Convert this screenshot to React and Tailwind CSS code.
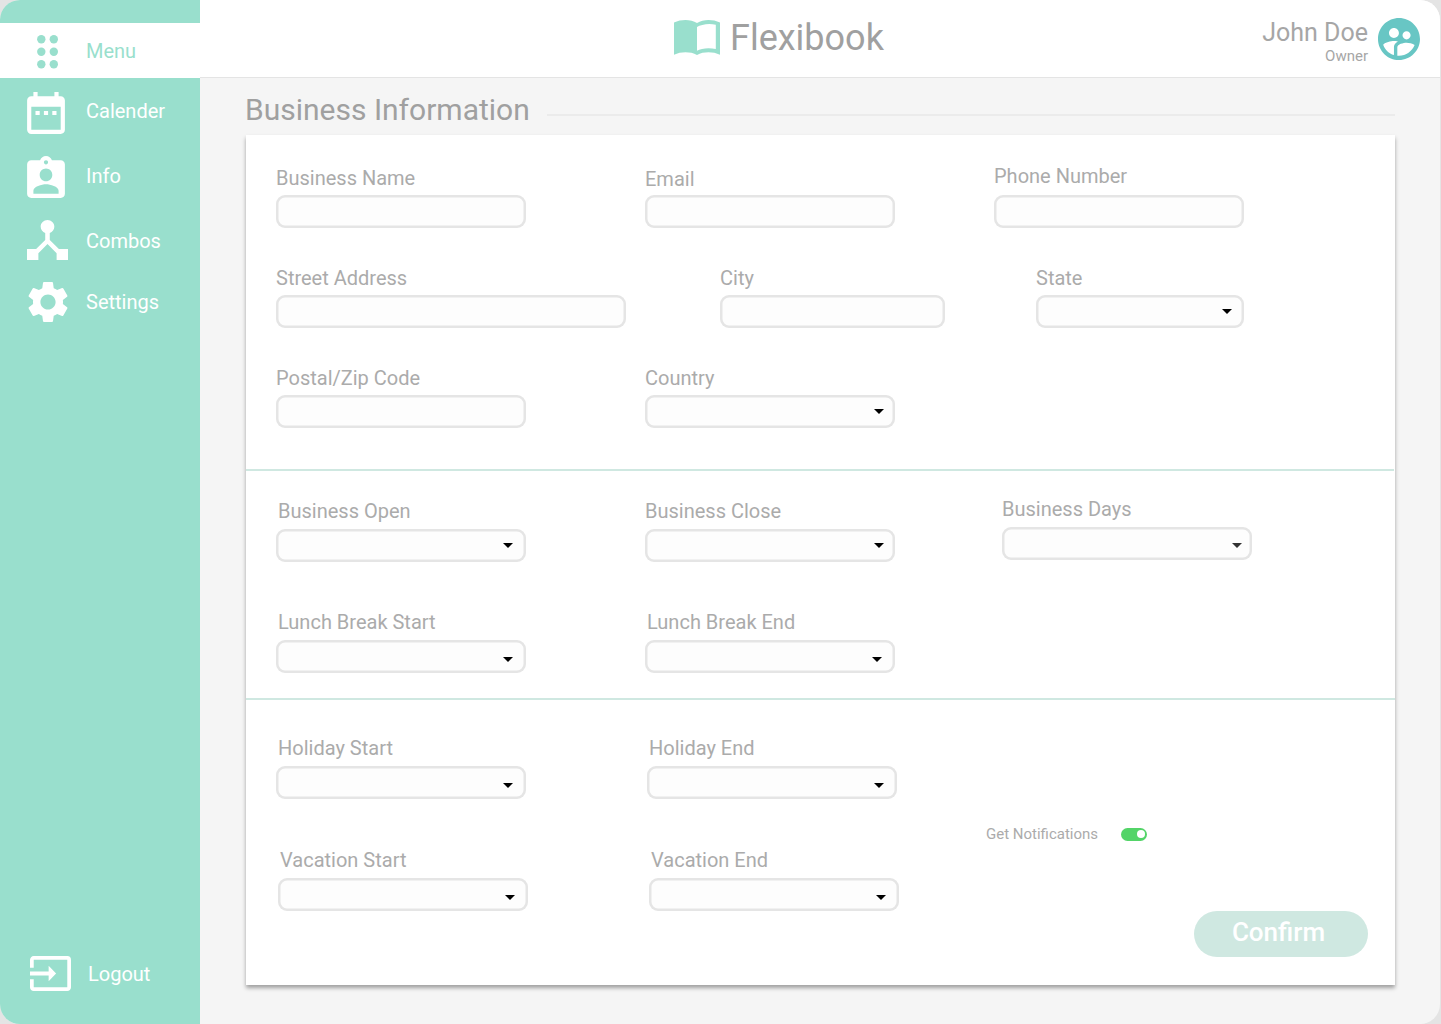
import React from "react";
import {
  MdAssignmentInd,
  MdDateRange,
  MdDeviceHub,
  MdInput,
  MdSupervisedUserCircle,
} from "react-icons/md";

function DotsIcon({ className }) {
  return (
    <svg className={className} viewBox="0 0 21 34" fill="currentColor">
      {[4.3, 16.8].map((x) =>
        [4.3, 16.8, 29.3].map((y) => <circle key={`${x}-${y}`} cx={x} cy={y} r="4.2" />)
      )}
    </svg>
  );
}

function GearIcon({ className }) {
  return (
    <svg className={className} viewBox="2 2 20 20" fill="currentColor">
      <path d="M19.43 12.98c.04-.32.07-.64.07-.98s-.03-.66-.07-.98l2.11-1.65c.19-.15.24-.42.12-.64l-2-3.46c-.12-.22-.39-.3-.61-.22l-2.49 1c-.52-.4-1.08-.73-1.69-.98l-.38-2.65C14.46 2.18 14.25 2 14 2h-4c-.25 0-.46.18-.49.42l-.38 2.65c-.61.25-1.17.59-1.69.98l-2.49-1c-.23-.09-.49 0-.61.22l-2 3.46c-.13.22-.07.49.12.64l2.11 1.65c-.04.32-.07.65-.07.98s.03.66.07.98l-2.11 1.65c-.19.15-.24.42-.12.64l2 3.46c.12.22.39.3.61.22l2.49-1c.52.4 1.08.73 1.69.98l.38 2.65c.03.24.24.42.49.42h4c.25 0 .46-.18.49-.42l.38-2.65c.61-.25 1.17-.59 1.69-.98l2.49 1c.23.09.49 0 .61-.22l2-3.46c.12-.22.07-.49-.12-.64l-2.11-1.65zM12 15.8c-2.1 0-3.8-1.7-3.8-3.8s1.7-3.8 3.8-3.8 3.8 1.7 3.8 3.8-1.7 3.8-3.8 3.8z" />
    </svg>
  );
}

function BookIcon({ className }) {
  return (
    <svg className={className} viewBox="0 0 46 35" fill="currentColor">
      <path
        fillRule="evenodd"
        d="M0 2.6C3.6.8 7.6 0 11.5 0 15.600 0 19.800.8 23 3.100 26.200.8 30.400 0 34.500 0 38.400 0 42.400.8 46 2.600V34.700C42.400 33 38.500 32.200 34.500 32.200 30.400 32.200 26.400 32.900 23 35 19.600 32.900 15.600 32.200 11.500 32.200 7.500 32.200 3.600 33 0 34.700ZM23 7V30.800C27 28.500 34.500 27.200 41.800 29.100V4.700C34.500 2.900 27 4.500 23 7Z"
      />
    </svg>
  );
}

function Caret({ className }) {
  return (
    <svg className={`h-[5px] w-[10px] ${className}`} viewBox="0 0 10 5" fill="currentColor">
      <path d="M0 0H10L5 5Z" />
    </svg>
  );
}

function Field({ label, className = "", labelClass = "mb-[5px]", width = "w-[250px]", caret }) {
  return (
    <div className={`flex flex-none flex-col ${width} ${className}`}>
      <label className={`whitespace-nowrap text-[20px] leading-6 text-[#ababab] ${labelClass}`}>
        {label}
      </label>
      <div className="flex h-[33px] items-center justify-end rounded-[9px] bg-[#fdfdfd] shadow-[inset_0_0_0_2.5px_#e5e5e5]">
        {caret && <Caret className={caret} />}
      </div>
    </div>
  );
}

function NavItem({ icon, label, className }) {
  return (
    <a className={`flex flex-none items-center text-[20px] leading-6 ${className}`}>
      {icon}
      <span>{label}</span>
    </a>
  );
}

function Sidebar() {
  return (
    <nav className="flex w-[200px] flex-none flex-col bg-[#99dfcd] text-white">
      <NavItem
        className="mt-[23px] h-[55px] bg-white pl-[37px] text-[#99dfcd]"
        icon={<DotsIcon className="mt-[2px] mr-7 h-[34px] w-[21px]" />}
        label="Menu"
      />
      <NavItem
        className="h-[65px] pl-[27px]"
        icon={<MdDateRange viewBox="3 2 18 20" className="mt-1 mr-[21px] h-[42px] w-[38px]" />}
        label="Calender"
      />
      <NavItem
        className="h-[65px] pl-[27px]"
        icon={<MdAssignmentInd viewBox="3 1 18 20" className="mt-[3px] mr-[21px] h-[42px] w-[38px]" />}
        label="Info"
      />
      <NavItem
        className="h-[65px] pl-[27px]"
        icon={<MdDeviceHub viewBox="3 3 18 18" preserveAspectRatio="none" className="mb-px mr-[18px] h-10 w-[41px]" />}
        label="Combos"
      />
      <NavItem
        className="h-[58px] pl-[27.500px]"
        icon={<GearIcon className="mr-[18.500px] h-10 w-10" />}
        label="Settings"
      />
      <NavItem
        className="mt-auto mb-[32px] h-9 pl-[30px]"
        icon={<MdInput viewBox="1 3 22 18" preserveAspectRatio="none" className="mb-[2px] mr-[17px] h-[35px] w-[41px]" />}
        label="Logout"
      />
    </nav>
  );
}

function Header() {
  return (
    <header className="flex h-[78px] flex-none items-start border-b border-[#e4e4e4] bg-white pr-5 pl-[474px]">
      <div className="flex items-start text-[#99dfcd]">
        <BookIcon className="mt-5 h-[35px] w-[46px]" />
        <span className="mt-[16px] ml-[10px] text-[36px] leading-[44px] text-[#a0a0a0]">Flexibook</span>
      </div>
      <div className="mt-[17px] ml-auto flex flex-col items-end text-[#a6a6a6]">
        <span className="text-[25px] leading-[31px]">John Doe</span>
        <span className="text-[15px] leading-[17px]">Owner</span>
      </div>
      <MdSupervisedUserCircle viewBox="2 2 20 20" className="mt-[18px] ml-[10px] h-[42px] w-[42px] text-[#68c6c4]" />
    </header>
  );
}

export default function App() {
  return (
    <div className="h-[1024px] w-[1441px] overflow-hidden bg-[#e4e4e4] font-['Roboto',sans-serif]">
      <div className="flex h-full w-[1440px] overflow-hidden rounded-[20px] bg-[#f5f5f5]">
        <Sidebar />
        <div className="flex flex-1 flex-col">
          <Header />
          <main className="flex flex-col pr-[45px] pl-[46px]">
            <div className="flex h-[57px] items-start">
              <h1 className="mt-[14px] -ml-px w-[285px] whitespace-nowrap text-[30px] leading-9 text-[#a0a0a0]">
                Business Information
              </h1>
              <div className="mt-9 ml-[17px] h-[2px] flex-1 bg-[#ebebeb]" />
            </div>
            <div className="h-[850px] bg-white shadow-[0_3px_4px_rgba(0,0,0,0.35)]">
              <section className="mr-px flex h-[336px] flex-col gap-[38px] border-b-2 border-[#cfe8e1] pt-[31px] pl-[30px]">
                <div className="flex h-[62px] items-end">
                  <Field label="Business Name" />
                  <Field label="Email" labelClass="mb-1" className="ml-[119px]" />
                  <Field label="Phone Number" labelClass="mb-[7px]" className="ml-[99px]" />
                </div>
                <div className="flex h-[62px] items-end">
                  <Field label="Street Address" width="w-[350px]" />
                  <Field label="City" width="w-[225px]" className="ml-[94px]" />
                  <Field label="State" width="w-[208px]" className="ml-[91px]" caret="mr-3 text-black" />
                </div>
                <div className="flex h-[62px] items-end">
                  <Field label="Postal/Zip Code" />
                  <Field label="Country" className="ml-[119px]" caret="mr-[11px] text-black" />
                </div>
              </section>
              <section className="flex h-[229px] flex-col gap-[49px] border-b-2 border-[#cfe8e1] pt-[29px] pl-[30px]">
                <div className="flex h-[62px] items-end">
                  <Field label="Business Open" labelClass="mb-[6px] ml-[2px]" caret="mr-[13px] text-black" />
                  <Field label="Business Close" labelClass="mb-[6px]" className="ml-[119px]" caret="mr-[11px] text-black" />
                  <Field label="Business Days" labelClass="mb-[6px]" className="mb-[2px] ml-[107px]" caret="mr-[10px] mt-[4px] text-[#333]" />
                </div>
                <div className="flex h-[62px] items-end">
                  <Field label="Lunch Break Start" labelClass="mb-[6px] ml-[2px]" caret="mr-[13px] mt-[5px] text-black" />
                  <Field label="Lunch Break End" labelClass="mb-[6px] ml-[2px]" className="ml-[119px]" caret="mr-[13px] mt-[5px] text-black" />
                </div>
              </section>
              <section className="flex h-[285px] pt-[37px] pl-[30px]">
                <div className="flex w-[710px] flex-col gap-[50px]">
                  <div className="flex h-[62px] items-end">
                    <Field label="Holiday Start" labelClass="mb-[6px] ml-[2px]" caret="mr-[13px] mt-[5px] text-black" />
                    <Field label="Holiday End" labelClass="mb-[6px] ml-[2px]" className="ml-[121px]" caret="mr-[13px] mt-[5px] text-black" />
                  </div>
                  <div className="flex h-[62px] items-end pl-[2px]">
                    <Field label="Vacation Start" labelClass="mb-[6px] ml-[2px]" caret="mr-[13px] mt-[5px] text-black" />
                    <Field label="Vacation End" labelClass="mb-[6px] ml-[2px]" className="ml-[121px]" caret="mr-[13px] mt-[5px] text-black" />
                  </div>
                </div>
                <div className="flex flex-1 flex-col pr-[27px]">
                  <div className="mt-[88px] flex h-[18px] items-center text-[15px] leading-[18px] text-[#ababab]">
                    <span className="w-[135px]">Get Notifications</span>
                    <span className="flex h-[13px] w-[26px] items-center justify-end rounded-full bg-[#53d468] pr-[2px]">
                      <span className="h-2 w-2 rounded-full bg-white" />
                    </span>
                  </div>
                  <button className="mt-[68px] h-[46px] w-[174px] self-end rounded-full bg-[#cfe8e1] pb-1 pr-[5px] text-[26px] leading-[42px] font-medium text-white">
                    Confirm
                  </button>
                </div>
              </section>
            </div>
          </main>
        </div>
      </div>
    </div>
  );
}
